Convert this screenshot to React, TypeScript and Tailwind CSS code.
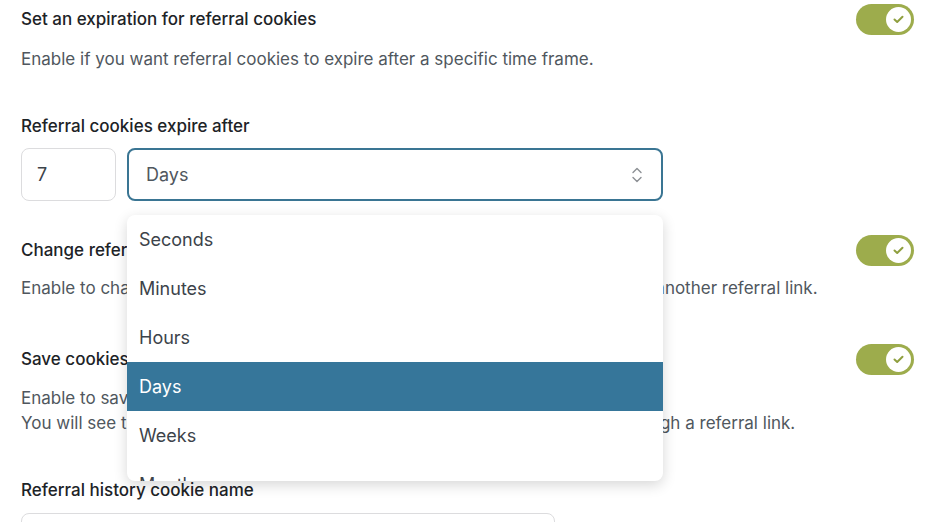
import React from 'react'

const units = ['Seconds', 'Minutes', 'Hours', 'Days', 'Weeks', 'Months', 'Years']

const Toggle = () => (
  <div className="w-[58px] h-[31px] rounded-full bg-[#9dac4c] flex items-center justify-end pr-[3px] shrink-0">
    <div className="w-[25px] h-[25px] rounded-full bg-white flex items-center justify-center">
      <svg width="11" height="9" viewBox="0 0 11 9" fill="none">
        <path d="M1.5 4.5 L4.2 7 L9.5 1.8" stroke="#8f9f3f" strokeWidth="2" strokeLinecap="round" strokeLinejoin="round" />
      </svg>
    </div>
  </div>
)

const App = () => {
  const selected = 'Days'

  return (
    <div className="w-[938px] h-[522px] overflow-hidden bg-white pl-[21px] pr-[24px] pt-[4px] font-['Inter',sans-serif] text-[17px] leading-[25px]">
      {/* expiration toggle */}
      <div className="flex justify-between items-center">
        <div className="font-medium text-[#1d2327]">Set an expiration for referral cookies</div>
        <Toggle />
      </div>
      <p className="mt-[12px] text-[#50575e]">Enable if you want referral cookies to expire after a specific time frame.</p>

      {/* expire after */}
      <div className="mt-[42px] font-medium text-[#1d2327]">Referral cookies expire after</div>
      <div className="mt-[9px] flex gap-[11px]">
        <div className="w-[95px] h-[53px] rounded-[8px] border border-[#dcdcde] flex items-center pl-[15px] text-[18px] text-[#3c434a]">7</div>
        <div className="relative">
          <div className="w-[536px] h-[53px] rounded-[8px] border-[2px] border-[#3a7593] flex items-center justify-between pl-[17px] pr-[18px] text-[18px] text-[#50575e]">
            <span>{selected}</span>
            <svg width="12" height="20" viewBox="0 0 12 20" fill="none">
              <path d="M2 7.5 L6 3.5 L10 7.5" stroke="#8c8f94" strokeWidth="1.4" strokeLinecap="round" strokeLinejoin="round" />
              <path d="M2 12.5 L6 16.5 L10 12.5" stroke="#8c8f94" strokeWidth="1.4" strokeLinecap="round" strokeLinejoin="round" />
            </svg>
          </div>
          <ul className="absolute z-10 left-0 top-[67px] w-[536px] h-[266px] overflow-hidden rounded-[8px] bg-white shadow-[0_4px_14px_rgba(0,0,0,0.16)]">
            {units.map((u) => (
              <li
                key={u}
                className={
                  u === selected
                    ? 'h-[49px] flex items-center pl-[12px] text-[18px] bg-[#36769a] text-white'
                    : 'h-[49px] flex items-center pl-[12px] text-[18px] text-[#3c434a]'
                }
              >
                {u}
              </li>
            ))}
          </ul>
        </div>
      </div>

      {/* change referral */}
      <div className="mt-[34px] flex justify-between items-center">
        <div className="font-medium text-[#1d2327]">Change referral cookie on new visit</div>
        <Toggle />
      </div>
      <p className="mt-[10px] text-[#50575e]">Enable to change the referral cookie when a user visits your site by clicking on another referral link.</p>

      {/* save cookies */}
      <div className="mt-[43px] flex justify-between items-center">
        <div className="font-medium text-[#1d2327]">Save cookies history</div>
        <Toggle />
      </div>
      <p className="mt-[11px] text-[#50575e]">
        Enable to save the history of the referral cookies of each user.
        <br />
        You will see the list of the referrers every time the user visits your website through a referral link.
      </p>

      {/* history cookie name */}
      <div className="mt-[42px] font-medium text-[#1d2327]">Referral history cookie name</div>
      <div className="mt-[10px] w-[534px] h-[46px] rounded-[8px] border border-[#dcdcde]" />
    </div>
  )
}

export default App
